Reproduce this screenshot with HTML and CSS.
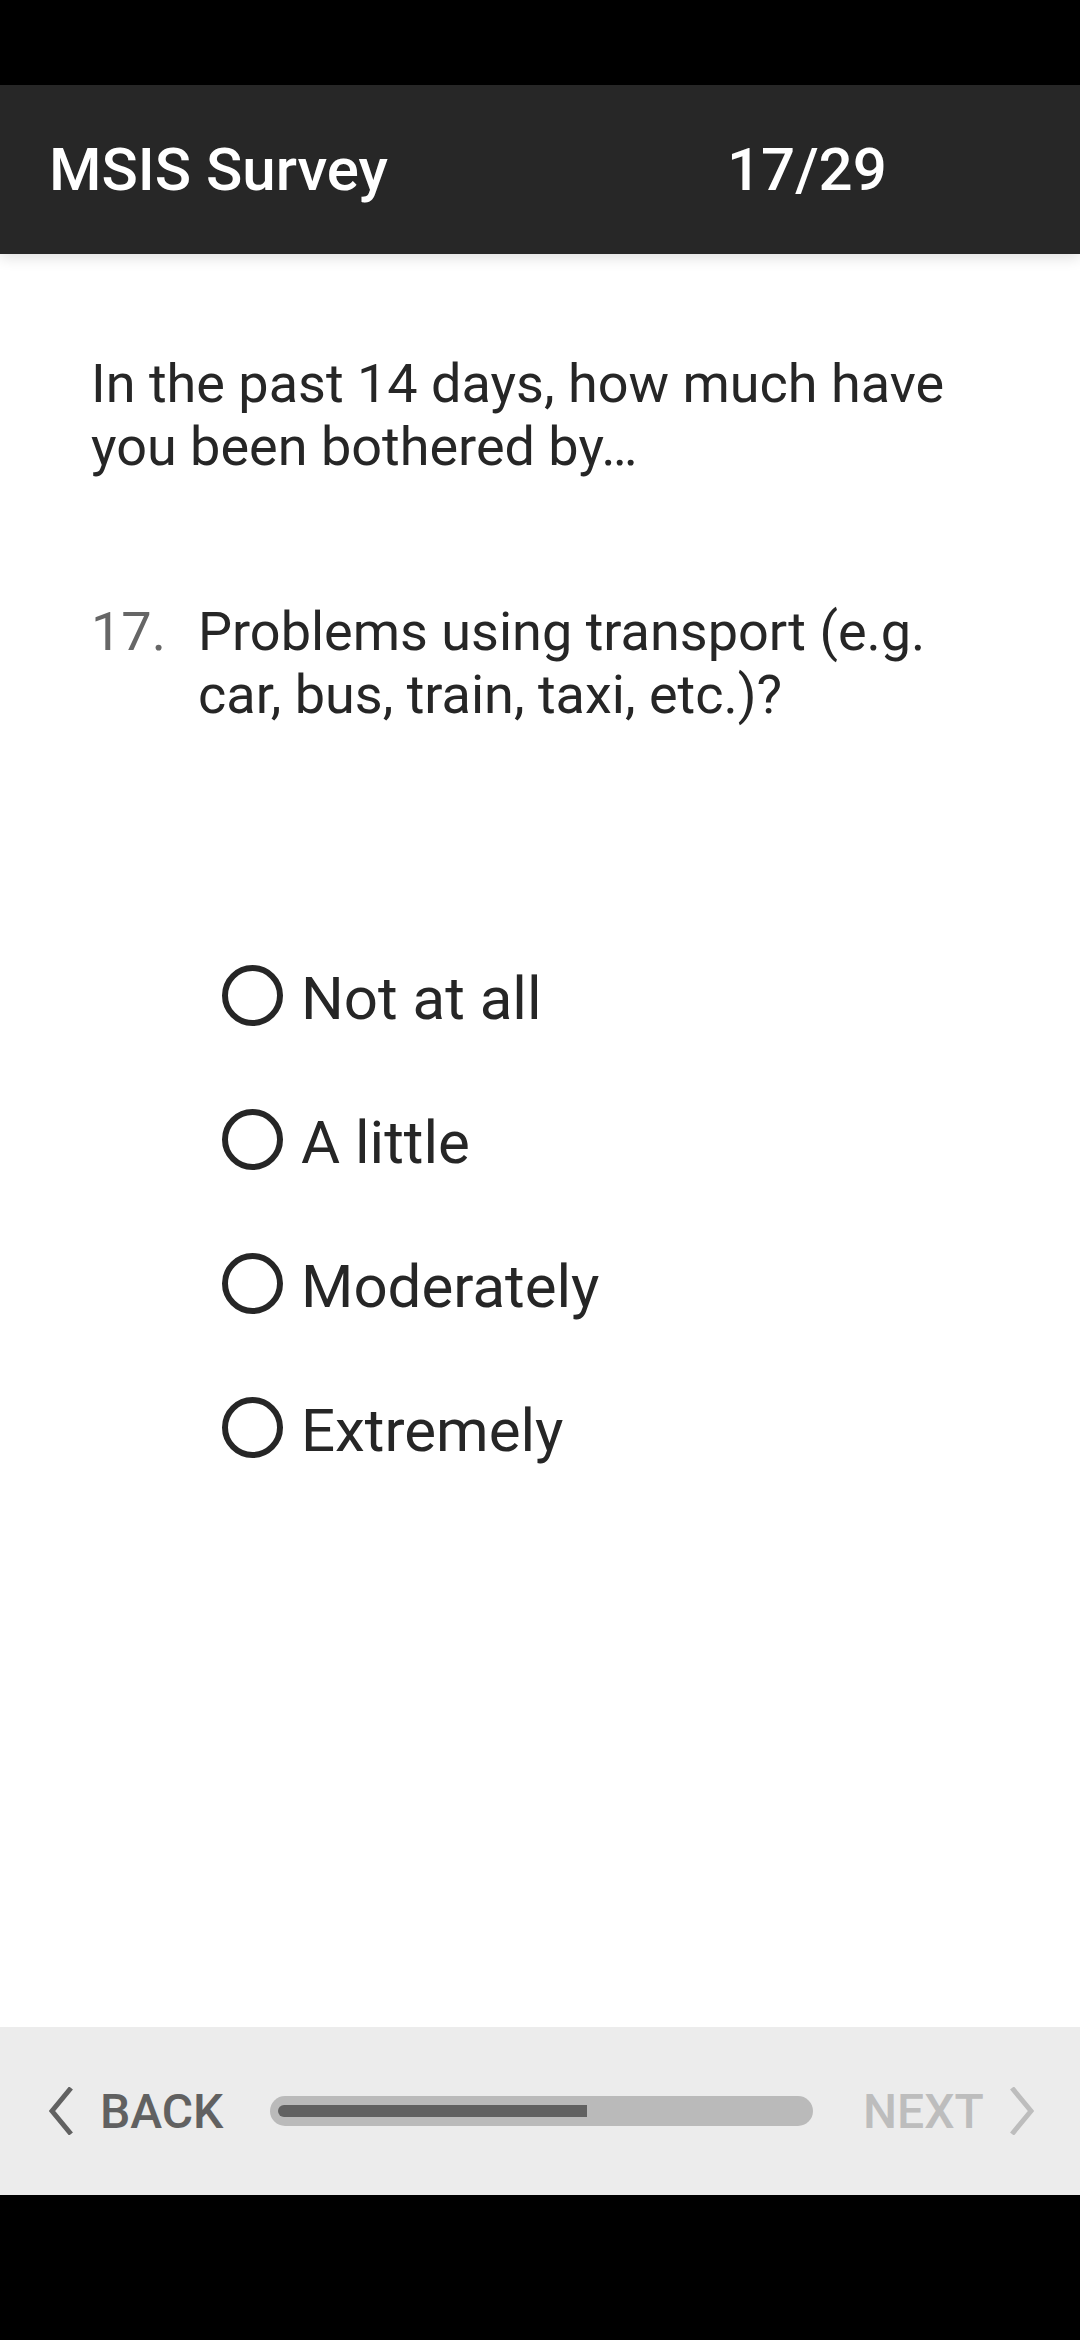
FILE: index.html
```html
<!DOCTYPE html>
<html lang="en">
<head>
<meta charset="utf-8">
<title>MSIS Survey</title>
<link rel="stylesheet" href="styles.css">
</head>
<body>
<div class="screen">
  <div class="status-bar"></div>
  <header class="app-bar">
    <div class="app-title">MSIS Survey</div>
    <div class="app-count">17/29</div>
  </header>
  <main class="content">
    <p class="intro">In the past 14 days, how much have you been bothered by…</p>
    <div class="question">
      <span class="q-num">17.</span>
      <span class="q-text">Problems using transport (e.g. car, bus, train, taxi, etc.)?</span>
    </div>
    <ul class="options">
      <li class="option"><span class="radio"></span><span class="label">Not at all</span></li>
      <li class="option"><span class="radio"></span><span class="label">A little</span></li>
      <li class="option"><span class="radio"></span><span class="label">Moderately</span></li>
      <li class="option"><span class="radio"></span><span class="label">Extremely</span></li>
    </ul>
  </main>
  <footer class="bottom-bar">
    <div class="nav-btn back">
      <svg class="chev" viewBox="0 0 24 48" width="24" height="48"><polyline points="22,1 3,24 22,47" fill="none" stroke="currentColor" stroke-width="5"/></svg>
      <span class="nav-text">BACK</span>
    </div>
    <div class="progress"><div class="progress-fill" style="width:58.6%"></div></div>
    <div class="nav-btn next">
      <span class="nav-text">NEXT</span>
      <svg class="chev" viewBox="0 0 24 48" width="24" height="48"><polyline points="2,1 21,24 2,47" fill="none" stroke="currentColor" stroke-width="5"/></svg>
    </div>
  </footer>
  <div class="nav-bar"></div>
</div>
</body>
</html>
```
FILE: styles.css
```css
* { box-sizing: border-box; }
html, body { margin: 0; padding: 0; }
body {
  width: 1080px;
  height: 2340px;
  background: #000;
  font-family: Roboto, "Noto Sans", "Liberation Sans", sans-serif;
  overflow: hidden;
}
.screen {
  display: flex;
  flex-direction: column;
  height: 2340px;
}
.status-bar {
  height: 85px;
  background: #000;
  flex: none;
}
.app-bar {
  height: 169px;
  flex: none;
  background: #272727;
  display: flex;
  align-items: center;
  padding-left: 49px;
  color: #fff;
  font-size: 60px;
  font-weight: 500;
  position: relative;
  z-index: 1;
  box-shadow: 0 3px 14px rgba(0, 0, 0, 0.14);
}
.app-title { width: 678px; }
.content {
  flex: 1;
  background: #fff;
  padding: 98px 91px 0 91px;
  color: #262626;
}
.intro {
  margin: 0;
  font-size: 54px;
  line-height: 63px;
}
.question {
  margin-top: 122px;
  display: flex;
  font-size: 54px;
  line-height: 63px;
}
.q-num {
  flex: none;
  width: 107px;
  color: #666;
}
.q-text { flex: 1; }
.options {
  list-style: none;
  margin: 197px 0 0 0;
  padding: 0 0 0 131px;
}
.option {
  height: 144px;
  display: flex;
  align-items: center;
}
.radio {
  flex: none;
  width: 61px;
  height: 61px;
  border: 6px solid #262626;
  border-radius: 50%;
}
.label {
  margin-left: 18px;
  padding-top: 7px;
  font-size: 60px;
  color: #262626;
}
.bottom-bar {
  height: 168px;
  flex: none;
  background: #ececec;
  display: flex;
  align-items: center;
}
.nav-btn {
  display: flex;
  align-items: center;
  font-size: 48px;
  font-weight: 500;
}
.back {
  color: #616161;
  padding-left: 49px;
  width: 270px;
}
.back .nav-text { margin-left: 27px; }
.next {
  color: #bdbdbd;
  margin-left: 50px;
}
.next .nav-text { margin-right: 26px; }
.chev { display: block; flex: none; }
.progress {
  width: 543px;
  height: 30px;
  border-radius: 15px;
  background: #bababa;
  padding: 9px 8px;
}
.progress-fill {
  height: 12px;
  background: #616161;
  border-radius: 6px 0 0 6px;
}
.nav-bar {
  height: 145px;
  flex: none;
  background: #000;
}
```
